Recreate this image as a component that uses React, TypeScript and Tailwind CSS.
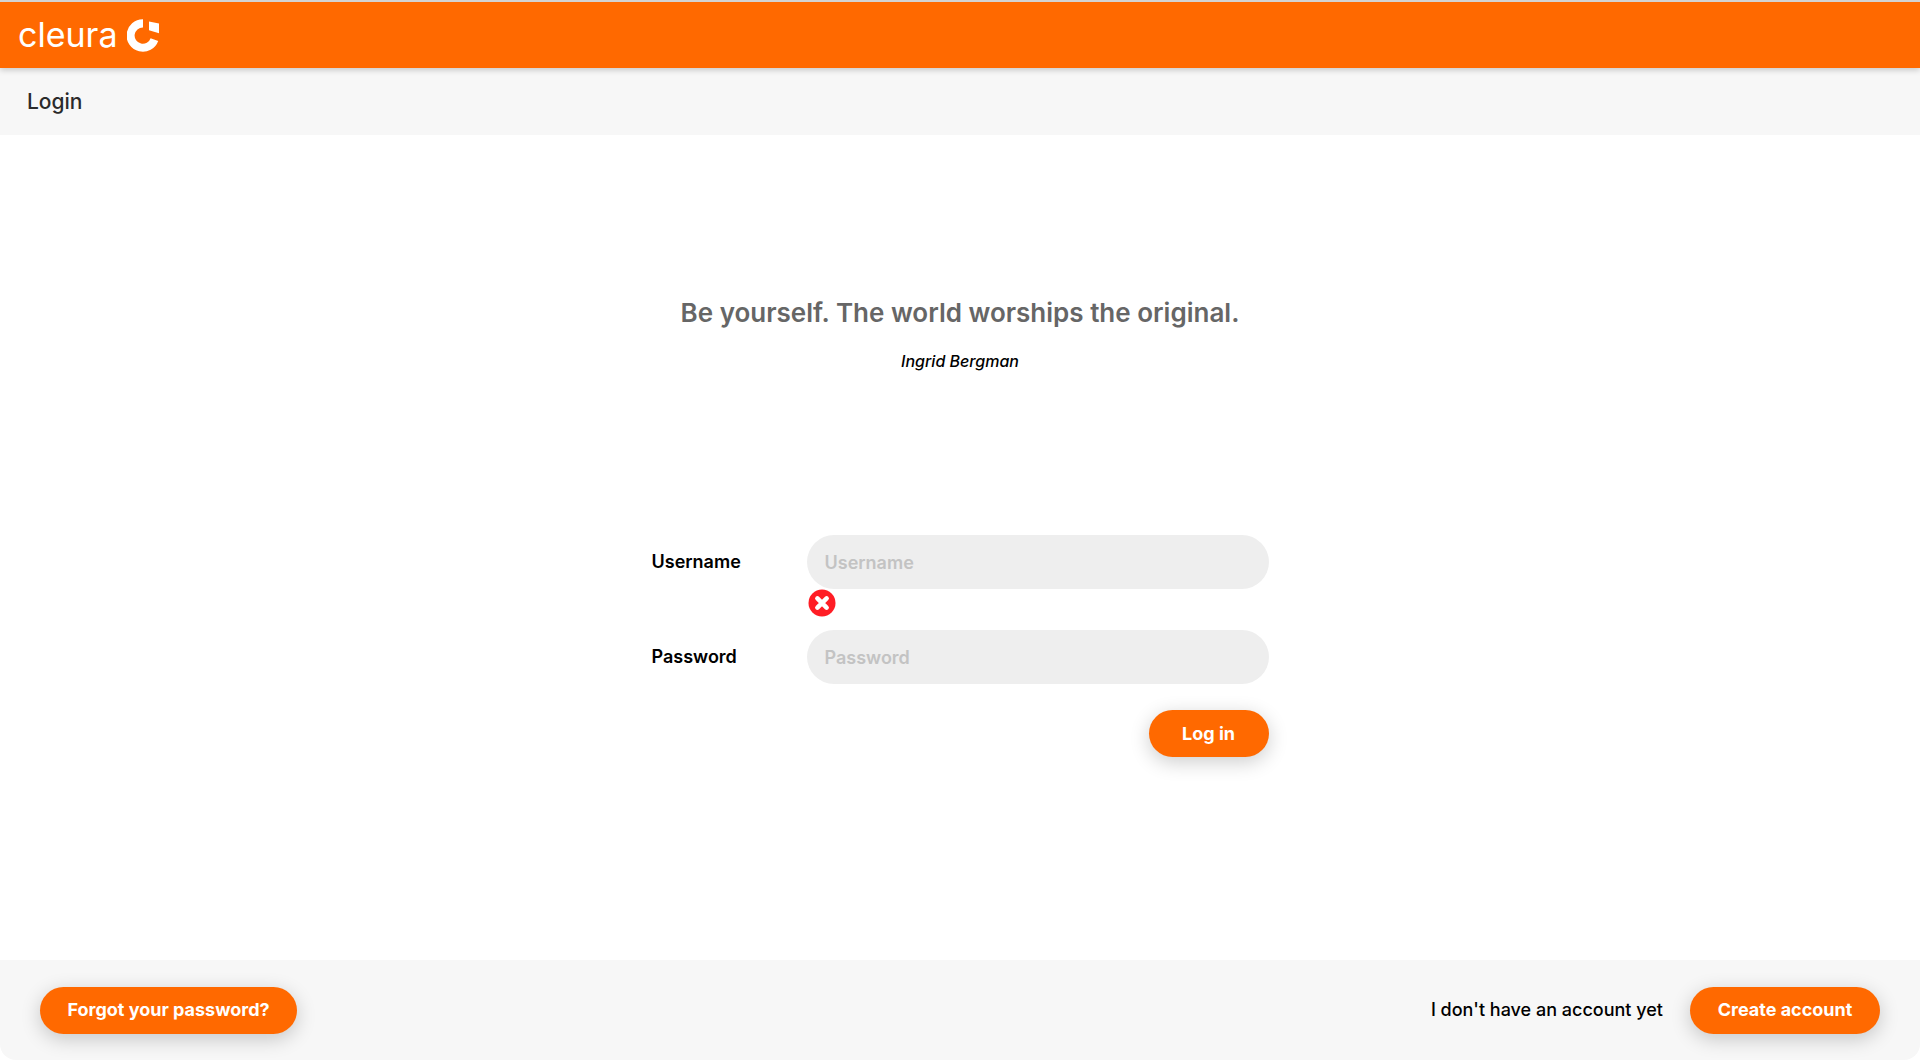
import React from "react";

const buttonClass =
  "h-[47px] rounded-full bg-[#ff6900] text-lg font-bold text-white shadow-[0_5px_20px_rgba(0,0,0,0.2)]";
const inputClass =
  "h-[54px] w-full rounded-full bg-[#eeeeee] px-[18px] text-lg font-semibold outline-none placeholder:text-[#c3c3c3]";
const labelClass = "w-[155px] shrink-0 text-lg font-semibold";

function Header() {
  return (
    <header className="relative flex h-[68px] shrink-0 items-center border-t-2 border-[#d3d3d3] bg-[#ff6900] px-[18px] shadow-[0_2px_6px_rgba(0,0,0,0.2)]">
      <a href="#" aria-label="cleura home" className="flex items-center gap-2.5 text-white">
        <span className="text-[34px] leading-10">cleura</span>
        <svg width="32" height="33" viewBox="0 0 32 33" fill="currentColor" aria-hidden="true">
          <path d="M16 0.2A16.3 16.3 0 1 0 31.2 22L23.6 19.2A8.2 8.2 0 1 1 16 8.4Z" />
          <path d="M22 2.4L32 4.6V14.2L22 11.2Z" />
        </svg>
      </a>
    </header>
  );
}

function ErrorIcon() {
  return (
    <svg width="28" height="28" viewBox="0 0 28 28" role="img" aria-label="Error" className="ml-[156px]">
      <circle cx="14" cy="14" r="13.5" fill="#ff1d25" />
      <path d="M9.4 9.4L18.6 18.6M18.6 9.4L9.4 18.6" stroke="white" strokeWidth="4.6" strokeLinecap="round" />
    </svg>
  );
}

export default function App() {
  return (
    <div className="flex min-h-screen flex-col overflow-hidden rounded-b-2xl bg-white font-['Inter',sans-serif] text-black">
      <Header />
      <div className="flex h-[67px] shrink-0 items-center bg-[#f7f7f7] px-[27px]">
        <h1 className="text-[21px] font-medium leading-7 text-[#2b2b2b]">Login</h1>
      </div>
      <main className="flex flex-1 flex-col items-center px-4 pt-40">
        <figure className="text-center">
          <blockquote className="text-[26px] font-semibold leading-9 text-[#666666]">
            Be yourself. The world worships the original.
          </blockquote>
          <figcaption className="mt-5 text-base font-medium italic leading-5">Ingrid Bergman</figcaption>
        </figure>
        <form className="mt-[164px] w-full max-w-[617px]" onSubmit={(e) => e.preventDefault()}>
          <div className="flex items-center">
            <label htmlFor="username" className={labelClass}>Username</label>
            <input id="username" type="text" placeholder="Username" className={inputClass} />
          </div>
          <div className="flex h-[41px] items-start">
            <ErrorIcon />
          </div>
          <div className="flex items-center">
            <label htmlFor="password" className={labelClass}>Password</label>
            <input id="password" type="password" placeholder="Password" className={inputClass} />
          </div>
          <div className="mt-[26px] flex justify-end">
            <button type="submit" className={`${buttonClass} w-[120px]`}>Log in</button>
          </div>
        </form>
      </main>
      <footer className="flex h-[100px] shrink-0 items-center justify-between bg-[#f7f7f7] px-10">
        <button type="button" className={`${buttonClass} w-[257px]`}>Forgot your password?</button>
        <div className="flex items-center gap-[27px]">
          <span className="text-lg font-medium">I don't have an account yet</span>
          <button type="button" className={`${buttonClass} w-[190px]`}>Create account</button>
        </div>
      </footer>
    </div>
  );
}
